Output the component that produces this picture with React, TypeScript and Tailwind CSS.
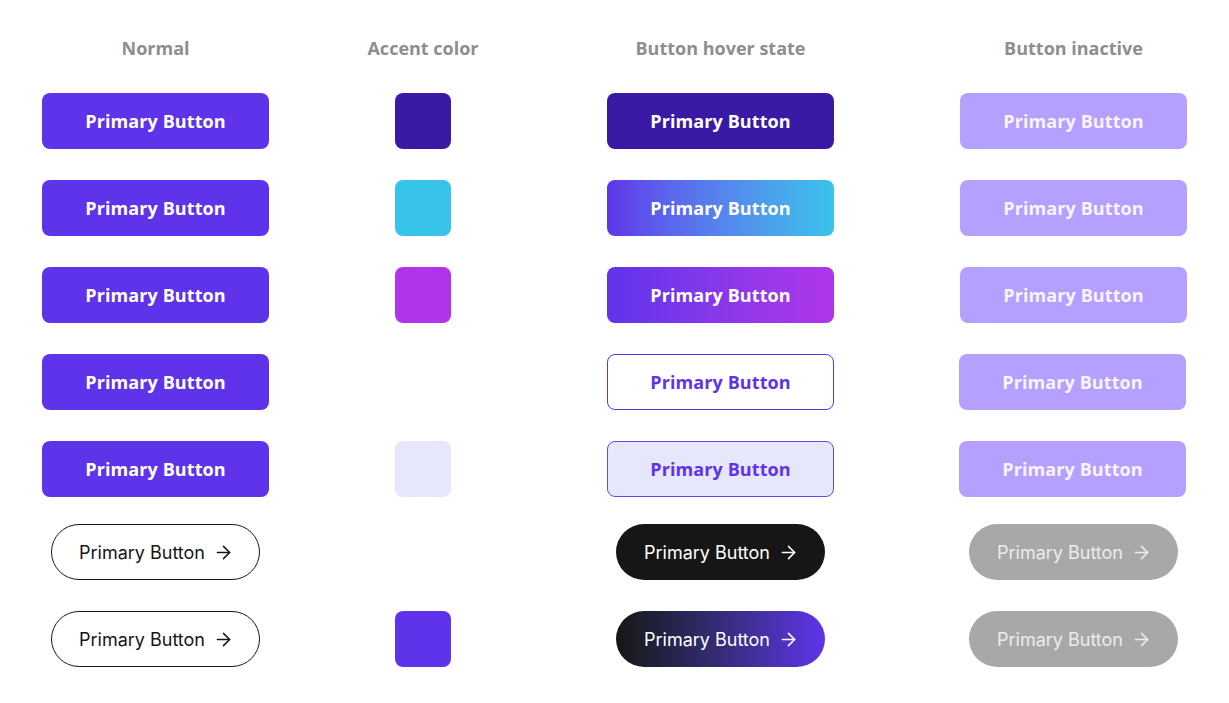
import React from 'react';
import { ArrowRight } from 'lucide-react';

const poppins = "font-['Open_Sans',sans-serif]";

// flat rectangular button (normal / hover / inactive)
const Rect = ({ className = '' }: { className?: string }) => (
  <div
    className={`w-[227px] h-[56px] rounded-[8px] flex items-center justify-center pt-[1px] text-[18px] font-bold tracking-[0.1px] ${poppins} ${className}`}
  >
    Primary Button
  </div>
);

// pill button with arrow
const Pill = ({ className = '' }: { className?: string }) => (
  <div
    className={`w-[209px] h-[56px] rounded-full flex items-center justify-center gap-[8px] pl-[2px] pt-[1px] text-[18px] font-['Inter',sans-serif] ${className}`}
  >
    <span>Primary Button</span>
    <ArrowRight size={21} strokeWidth={1.75} className="-mt-[1px]" />
  </div>
);

const Swatch = ({ color }: { color?: string }) =>
  color ? <div className={`w-[56px] h-[56px] rounded-[8px] ${color}`} /> : <div className="w-[56px] h-[56px]" />;

const Row = ({ children, className = '' }: { children: React.ReactNode; className?: string }) => (
  <div className={`grid grid-cols-[311px_224px_371px_335px] justify-items-center items-center ${className}`}>
    {children}
  </div>
);

const normal = 'bg-[#5f33ea] text-white';
const inactive = 'bg-[#b59fff] text-[#f7f4ff]';

export default function App() {
  return (
    <div className="w-[1229px] h-[703px] overflow-hidden bg-white pt-[35px]">
      {/* column headers */}
      <Row className={`h-[24px] text-[18px] font-bold text-[#8e8e8e] ${poppins}`}>
        <div>Normal</div>
        <div>Accent color</div>
        <div>Button hover state</div>
        <div>Button inactive</div>
      </Row>

      <div className="mt-[34px] flex flex-col gap-[31px]">
        <Row>
          <Rect className={normal} />
          <Swatch color="bg-[#3a19a4]" />
          <Rect className="bg-[#3a19a4] text-white" />
          <Rect className={inactive} />
        </Row>
        <Row>
          <Rect className={normal} />
          <Swatch color="bg-[#38c3ea]" />
          <Rect className="bg-gradient-to-r from-[#5f33ea] to-[#38c3ea] text-white" />
          <Rect className={inactive} />
        </Row>
        <Row>
          <Rect className={normal} />
          <Swatch color="bg-[#b035ea]" />
          <Rect className="bg-gradient-to-r from-[#5f33ea] to-[#b035ea] text-white" />
          <Rect className={inactive} />
        </Row>
        <Row>
          <Rect className={normal} />
          <Swatch />
          <Rect className="bg-white border border-[#5f33ea] text-[#5f33ea]" />
          <div className="-ml-[2px]">
            <Rect className={inactive} />
          </div>
        </Row>
        <Row>
          <Rect className={normal} />
          <Swatch color="bg-[#e6e6fd]" />
          <Rect className="bg-[#e6e6fd] border border-[#6a46ea] text-[#5f33ea]" />
          <div className="-ml-[2px]">
            <Rect className={inactive} />
          </div>
        </Row>
      </div>

      <div className="mt-[27px] flex flex-col gap-[31px]">
        <Row>
          <Pill className="border border-[#161616] text-[#161616] bg-white" />
          <Swatch />
          <Pill className="bg-[#161616] text-white" />
          <Pill className="bg-[#a8a8a8] text-[#ececec]" />
        </Row>
        <Row>
          <Pill className="border border-[#161616] text-[#161616] bg-white" />
          <Swatch color="bg-[#5f33ea]" />
          <Pill className="bg-gradient-to-r from-[#161616] to-[#5f33ea] text-white" />
          <Pill className="bg-[#a8a8a8] text-[#ececec]" />
        </Row>
      </div>
    </div>
  );
}
